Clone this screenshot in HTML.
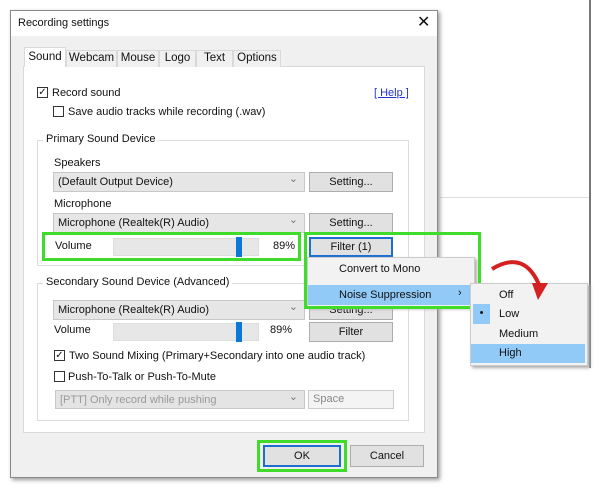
<!DOCTYPE html>
<html><head><style>
*{box-sizing:border-box;margin:0;padding:0}
body{width:600px;height:488px;background:#fff;position:relative;overflow:hidden;font-family:"Liberation Sans",sans-serif;font-size:11px;color:#111}
.a{position:absolute}
.btn{position:absolute;background:#e1e1e1;border:1px solid #adadad;text-align:center;line-height:18px}
.cb{position:absolute;background:#e6e6e6;border:1px solid #c8c8c8;padding-left:4px;line-height:18px}
.cb:after{content:"⌄";position:absolute;right:6px;top:-3px;color:#777}
.chk{position:absolute;width:11px;height:11px;border:1px solid #333;background:#fff;font-size:10px;line-height:9px;text-align:center}
.grp{position:absolute;border:1px solid #dcdcdc}
.gt{position:absolute;background:#fff;padding:0 3px}
.green{position:absolute;border:3px solid #3fdc2c}
.tab{position:absolute;top:50px;height:17px;background:#f0f0f0;border:1px solid #d9d9d9;border-bottom:none;text-align:center;line-height:15px;font-size:11.5px}
</style></head><body>
<div class="a" style="left:440px;top:197px;width:150px;height:1px;background:#ddd"></div>
<div class="a" style="left:589px;top:0;width:2px;height:368px;background:#777"></div>
<div class="a" style="left:10px;top:10px;width:428px;height:468px;background:#f0f0f0;border:1px solid #888;box-shadow:2px 2px 4px #999"></div>
<div class="a" style="left:11px;top:11px;width:426px;height:25px;background:#fff"></div>
<div class="a" style="left:18px;top:17px;font-size:11px">Recording settings</div>
<div class="a" style="left:417px;top:12px;font-size:16px">✕</div>
<!-- tabs -->
<div class="a" style="left:23px;top:66px;width:402px;height:367px;background:#fff;border:1px solid #d9d9d9"></div>
<div class="tab" style="left:24px;top:47px;width:42px;height:20px;background:#fff;line-height:18px">Sound</div>
<div class="tab" style="left:66px;width:51px">Webcam</div>
<div class="tab" style="left:117px;width:42px">Mouse</div>
<div class="tab" style="left:159px;width:37px">Logo</div>
<div class="tab" style="left:196px;width:37px">Text</div>
<div class="tab" style="left:233px;width:48px">Options</div>
<div class="chk" style="left:37px;top:87px">✓</div><div class="a" style="left:52px;top:87px">Record sound</div>
<div class="a" style="left:374px;top:87px;color:#2233cc;text-decoration:underline">[ Help ]</div>
<div class="chk" style="left:53px;top:106px"></div><div class="a" style="left:68px;top:106px">Save audio tracks while recording (.wav)</div>
<div class="grp" style="left:37px;top:140px;width:372px;height:126px"></div>
<div class="gt" style="left:43px;top:133px">Primary Sound Device</div>
<div class="a" style="left:54px;top:157px">Speakers</div>
<div class="cb" style="left:53px;top:172px;width:252px;height:20px">(Default Output Device)</div>
<div class="btn" style="left:309px;top:172px;width:84px;height:20px">Setting...</div>
<div class="a" style="left:54px;top:198px">Microphone</div>
<div class="cb" style="left:53px;top:213px;width:252px;height:20px">Microphone (Realtek(R) Audio)</div>
<div class="btn" style="left:309px;top:213px;width:84px;height:20px">Setting...</div>
<div class="a" style="left:53px;top:237px;width:60px;height:20px;background:#fff;padding:3px 2px">Volume</div>
<div class="a" style="left:113px;top:238px;width:146px;height:18px;background:#e7e7e7;border:1px solid #ddd"></div>
<div class="a" style="left:236px;top:237px;width:6px;height:20px;background:#0a78d7"></div>
<div class="a" style="left:259px;top:237px;width:40px;height:20px;background:#fff;padding:3px 4px;text-align:right">89%</div>
<div class="btn" style="left:309px;top:237px;width:84px;height:20px;border:2px solid #1c6fd0;line-height:16px">Filter (1)</div>
<div class="green" style="left:42px;top:232px;width:259px;height:29px"></div>
<div class="grp" style="left:37px;top:283px;width:372px;height:138px"></div>
<div class="gt" style="left:43px;top:276px">Secondary Sound Device (Advanced)</div>
<div class="cb" style="left:53px;top:300px;width:252px;height:20px">Microphone (Realtek(R) Audio)</div>
<div class="btn" style="left:309px;top:300px;width:84px;height:20px">Setting...</div>
<div class="a" style="left:54px;top:324px">Volume</div>
<div class="a" style="left:113px;top:323px;width:146px;height:18px;background:#e7e7e7;border:1px solid #ddd"></div>
<div class="a" style="left:236px;top:322px;width:6px;height:20px;background:#0a78d7"></div>
<div class="a" style="left:270px;top:324px">89%</div>
<div class="btn" style="left:309px;top:322px;width:84px;height:20px">Filter</div>
<div class="chk" style="left:54px;top:350px">✓</div><div class="a" style="left:69px;top:350px">Two Sound Mixing (Primary+Secondary into one audio track)</div>
<div class="chk" style="left:54px;top:371px"></div><div class="a" style="left:68px;top:371px">Push-To-Talk or Push-To-Mute</div>
<div class="cb" style="left:55px;top:390px;width:250px;height:19px;color:#999;background:#e4e4e4">[PTT] Only record while pushing</div>
<div class="a" style="left:308px;top:390px;width:86px;height:19px;border:1px solid #ccc;background:#f4f4f4;color:#888;padding:2px 4px">Space</div>
<!-- menu -->
<div class="a" style="left:307px;top:257px;width:168px;height:50px;background:#f2f2f2;border:1px solid #ccc;box-shadow:2px 2px 3px #aaa"></div>
<div class="a" style="left:339px;top:263px">Convert to Mono</div>
<div class="a" style="left:308px;top:285px;width:166px;height:20px;background:#91c9f7"></div>
<div class="a" style="left:339px;top:289px">Noise Suppression</div>
<div class="a" style="left:458px;top:287px">›</div>
<div class="green" style="left:304px;top:232px;width:177px;height:77px"></div>
<div class="a" style="left:470px;top:283px;width:118px;height:83px;background:#f2f2f2;border:1px solid #ccc;box-shadow:2px 2px 3px #aaa"></div>
<div class="a" style="left:499px;top:289px">Off</div>
<div class="a" style="left:473px;top:304px;width:17px;height:20px;background:#91c9f7;text-align:center;line-height:18px">•</div>
<div class="a" style="left:499px;top:308px">Low</div>
<div class="a" style="left:499px;top:328px">Medium</div>
<div class="a" style="left:471px;top:344px;width:114px;height:19px;background:#91c9f7"></div>
<div class="a" style="left:499px;top:347px">High</div>
<svg class="a" style="left:480px;top:255px" width="80" height="55"><path d="M12 14 Q45 -6 60 32" fill="none" stroke="#d42020" stroke-width="4"/><path d="M52 28 L68 28 L58 45 Z" fill="#d42020"/></svg>
<div class="btn" style="left:263px;top:445px;width:78px;height:22px;border:2px solid #1c6fd0;line-height:18px">OK</div>
<div class="btn" style="left:350px;top:445px;width:74px;height:22px;line-height:20px">Cancel</div>
<div class="green" style="left:257px;top:440px;width:90px;height:32px"></div>
</body></html>
